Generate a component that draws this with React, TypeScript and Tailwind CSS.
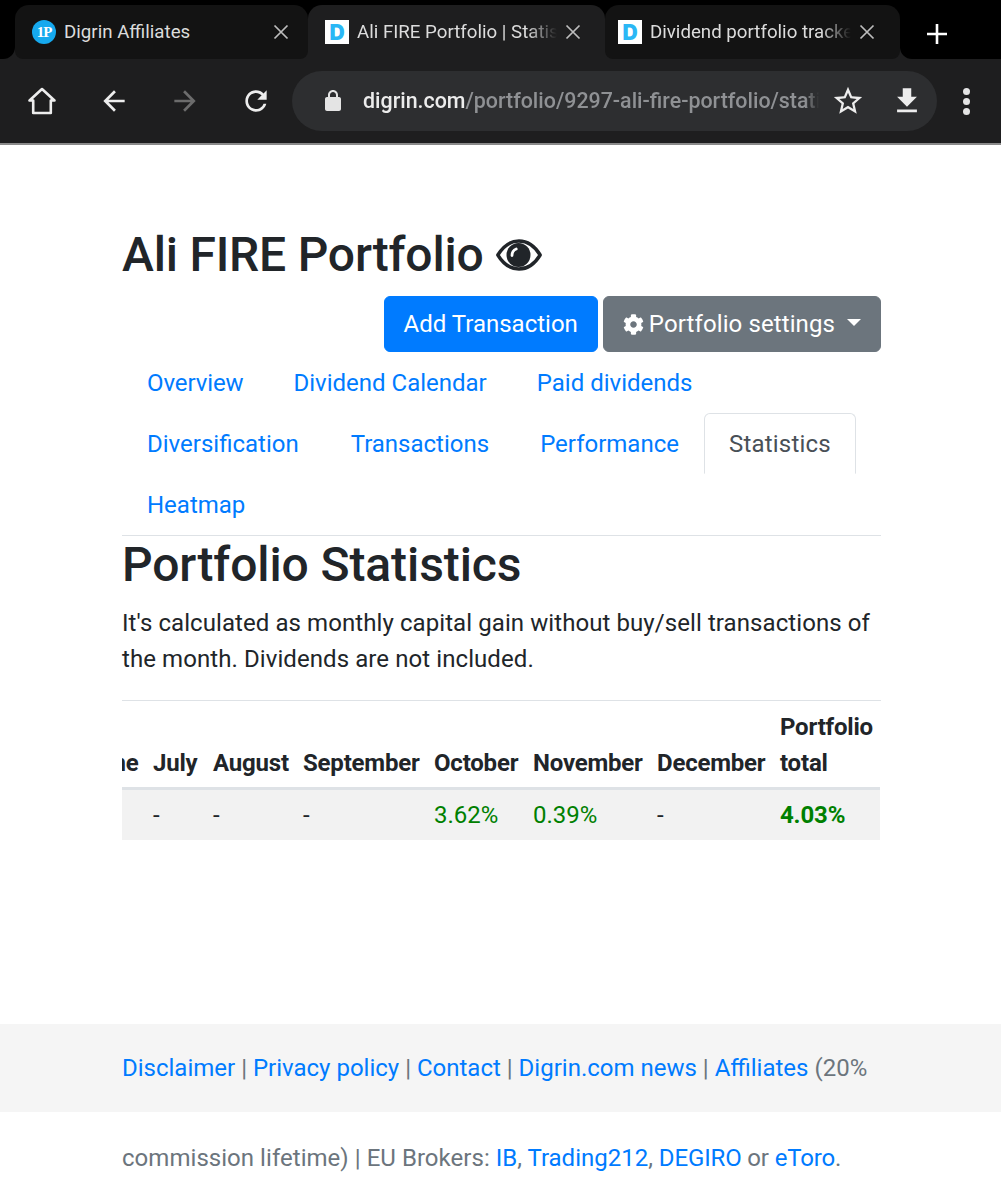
import React from "react";
import { FaCog } from "react-icons/fa";

const MaterialIcon = ({ d, className }: { d: string; className: string }) => (
  <svg viewBox="0 0 24 24" fill="currentColor" className={className}>
    <path d={d} />
  </svg>
);

const BACK = "M20 11H7.83l5.59-5.59L12 4l-8 8 8 8 1.41-1.41L7.83 13H20v-2z";
const FORWARD = "M4 11h12.17l-5.59-5.59L12 4l8 8-8 8-1.41-1.41L16.17 13H4v-2z";
const REFRESH =
  "M17.65 6.35C16.2 4.9 14.21 4 12 4c-4.42 0-7.99 3.58-7.99 8s3.57 8 7.99 8c3.73 0 6.84-2.55 7.73-6h-2.08c-.82 2.33-3.04 4-5.65 4-3.31 0-6-2.69-6-6s2.69-6 6-6c1.66 0 3.14.69 4.22 1.78L13 11h7V4l-2.35 2.35z";
const STAR =
  "M22 9.24l-7.19-.62L12 2 9.19 8.63 2 9.24l5.46 4.73L5.82 21 12 17.27 18.18 21l-1.63-7.03L22 9.24zM12 15.4l-3.76 2.27 1-4.28-3.32-2.88 4.38-.38L12 6.1l1.71 4.04 4.38.38-3.32 2.88 1 4.28L12 15.4z";
const DOWNLOAD = "M19 9h-4V3H9v6H5l7 7 7-7zM5 18v2h14v-2H5z";
const LOCK =
  "M18 8h-1V6c0-2.76-2.24-5-5-5S7 3.24 7 6v2H6c-1.1 0-2 .9-2 2v10c0 1.1.9 2 2 2h12c1.1 0 2-.9 2-2V10c0-1.1-.9-2-2-2zM9 8V6c0-1.66 1.34-3 3-3s3 1.34 3 3v2H9z";

const CloseIcon = () => (
  <svg viewBox="0 0 16 16" className="w-4 h-4 shrink-0 text-[#bdbdbd]" stroke="currentColor" strokeWidth="1.7" fill="none">
    <path d="M1.5 1.5l13 13M14.5 1.5l-13 13" />
  </svg>
);

const DFavicon = () => (
  <div className="w-6 h-6 shrink-0 bg-white flex items-center justify-center text-[#2ab7f5] font-black text-[21px] leading-none font-['Inter',sans-serif]">
    D
  </div>
);

const EyeIcon = () => (
  <svg viewBox="0 0 46 32" className="ml-3 w-[46px] h-8 shrink-0">
    <path
      d="M1.8 16C7 7.5 14.5 2 23 2s16 5.5 21.200 14C39 24.500 31.500 30 23 30S7 24.500 1.800 16Z"
      fill="none"
      stroke="currentColor"
      strokeWidth="3.4"
      strokeLinejoin="round"
    />
    <circle cx="22.500" cy="16" r="12" fill="currentColor" />
    <path d="M16 16.500c0-3.200 1.600-5.500 4.200-6.500" fill="none" stroke="#fff" strokeWidth="2.800" strokeLinecap="round" />
  </svg>
);

// keeps black behind a tab's top corners and toolbar colour behind the bottom ones
const TAB_BACK = "bg-[linear-gradient(to_bottom,#000_50%,#1e1e1f_50%)]";

const BrowserChrome = () => (
  <div className="bg-[#1e1e1f] border-b-2 border-[#8a8a8a] h-[145px]">
    <div className="bg-black h-[59px] pt-[5px]">
      <div className="h-[54px] bg-[#1e1e1f] flex items-stretch">
        <div className="w-[15px] bg-black rounded-br-[12px]" />
        <div className={`w-[293px] ${TAB_BACK}`}>
          <div className="h-full bg-[#131313] rounded-t-[14px] rounded-b-[8px] flex items-center pl-[17px] pr-[19px]">
            <div className="w-6 h-6 shrink-0 rounded-full bg-[#16a9ee] flex items-center justify-center text-white text-[15px] tracking-[-1px] font-bold leading-none font-['Liberation_Serif',serif]">
              1P
            </div>
            <span className="ml-2 flex-1 text-[18.7px] text-[#dcdcdc] whitespace-nowrap">Digrin Affiliates</span>
            <CloseIcon />
          </div>
        </div>
        <div className={`w-[297px] ${TAB_BACK}`}>
          <div className="h-full bg-[#1e1e1f] rounded-t-[14px] flex items-center pl-[17px] pr-6">
            <DFavicon />
            <span className="ml-2 flex-1 text-[18.7px] text-[#dcdcdc] whitespace-nowrap overflow-hidden [mask-image:linear-gradient(to_right,black_85%,transparent)]">
              Ali FIRE Portfolio | Statistics
            </span>
            <div className="ml-2">
              <CloseIcon />
            </div>
          </div>
        </div>
        <div className={`w-[295px] ${TAB_BACK}`}>
          <div className="h-full bg-[#131313] rounded-t-[14px] rounded-b-[8px] flex items-center pl-[13px] pr-[25px]">
            <DFavicon />
            <span className="ml-2 flex-1 text-[18.7px] text-[#dcdcdc] whitespace-nowrap overflow-hidden [mask-image:linear-gradient(to_right,black_85%,transparent)]">
              Dividend portfolio tracker
            </span>
            <div className="ml-2">
              <CloseIcon />
            </div>
          </div>
        </div>
        <div className="flex-1 bg-black rounded-bl-[12px] flex items-center pl-[25px]">
          <svg viewBox="0 0 24 24" className="w-6 h-6 mt-[3px] text-white" stroke="currentColor" strokeWidth="2.6">
            <path d="M12 2v20M2 12h20" />
          </svg>
        </div>
      </div>
    </div>
    <div className="h-[84px] flex items-center pl-[26px]">
      <svg viewBox="0 0 32 32" className="w-8 h-8 text-[#ededed]" fill="none" stroke="currentColor" strokeWidth="2.6" strokeLinejoin="round">
        <path d="M16 4L3.5 15.5h3.7V28h17.6V15.5h3.7z" />
      </svg>
      <MaterialIcon d={BACK} className="w-8 h-8 ml-[40px] text-[#ededed]" />
      <MaterialIcon d={FORWARD} className="w-8 h-8 ml-[39px] text-[#6c6c6c]" />
      <MaterialIcon d={REFRESH} className="w-8 h-8 ml-[39px] text-[#ededed]" />
      <div className="ml-5 w-[645px] h-[60px] rounded-full bg-[#2d2e30] flex items-center pl-[29px]">
        <MaterialIcon d={LOCK} className="w-6 h-6 shrink-0 text-[#e4e4e4]" />
        <div className="ml-[18px] w-[456px] shrink-0 whitespace-nowrap overflow-hidden text-[21.4px] font-medium [mask-image:linear-gradient(to_right,black_97%,transparent)]">
          <span className="text-[#ececec]">digrin.com</span>
          <span className="text-[#8f9194]">/portfolio/9297-ali-fire-portfolio/statistics</span>
        </div>
        <MaterialIcon d={STAR} className="w-[34px] h-[34px] ml-3 shrink-0 text-[#ededed]" />
        <MaterialIcon d={DOWNLOAD} className="w-[34px] h-[34px] ml-[25px] shrink-0 text-[#ededed]" />
      </div>
      <div className="ml-[26px] flex flex-col gap-[3px]">
        <span className="w-[7px] h-[7px] rounded-full bg-[#e4e4e4]" />
        <span className="w-[7px] h-[7px] rounded-full bg-[#e4e4e4]" />
        <span className="w-[7px] h-[7px] rounded-full bg-[#e4e4e4]" />
      </div>
    </div>
  </div>
);

const tabs = [
  { name: "Overview", extra: "tracking-[-0.1px]" },
  { name: "Dividend Calendar", extra: "" },
  { name: "Paid dividends", extra: "" },
  { name: "Diversification", extra: "" },
  { name: "Transactions", extra: "ml-[2px]" },
  { name: "Performance", extra: "ml-[1px]" },
  { name: "Statistics", extra: "" },
  { name: "Heatmap", extra: "" },
];

const NavTabs = () => (
  <ul className="flex flex-wrap border-b border-[#dee2e6]">
    {tabs.map((tab) =>
      tab.name === "Statistics" ? (
        <li key={tab.name} className="-mb-px">
          <a className="block px-6 py-[11.5px] border border-[#dee2e6] border-b-white rounded-t-[6px] text-[#495057] bg-white tracking-[0.2px]">{tab.name}</a>
        </li>
      ) : (
        <li key={tab.name} className={tab.extra}>
          <a className="block px-6 py-[11.5px] border border-transparent text-[#007bff]">{tab.name}</a>
        </li>
      )
    )}
  </ul>
);

const columns = [
  { name: "June", value: "-", width: "w-[67px]" },
  { name: "July", value: "-", width: "w-[60px]" },
  { name: "August", value: "-", width: "w-[90px]" },
  { name: "September", value: "-", width: "w-[131px]" },
  { name: "October", value: "3.62%", width: "w-[99px]", green: true },
  { name: "November", value: "0.39%", width: "w-[124px]", green: true },
  { name: "December", value: "-", width: "w-[123px]" },
];

const StatsTable = () => (
  <div className="overflow-hidden border-t border-[#dee2e6]">
    <table className="ml-[-43px] table-fixed w-[801px] border-collapse">
      <thead>
        <tr className="border-b-[3px] border-[#dee2e6]">
          {columns.map((col) => (
            <th key={col.name} className={`${col.width} pt-2 pb-[6px] px-[7px] text-left align-bottom font-bold tracking-[-0.2px] text-[#212529]`}>
              {col.name}
            </th>
          ))}
          <th className="pt-2 pb-[6px] px-[7px] text-left align-bottom font-bold tracking-[-0.2px] text-[#212529]">
            Portfolio
            <br />
            total
          </th>
        </tr>
      </thead>
      <tbody>
        <tr className="bg-[#f2f2f2]">
          {columns.map((col) => (
            <td key={col.name} className={`py-[7px] px-[7px] ${col.green ? "text-[#008000]" : "text-[#212529]"}`}>
              {col.value}
            </td>
          ))}
          <td className="py-[7px] px-[7px] font-bold tracking-[-0.15px] text-[#008000]">4.03%</td>
        </tr>
      </tbody>
    </table>
  </div>
);

const FooterLink = ({ children }: { children: React.ReactNode }) => <a className="text-[#007bff]">{children}</a>;

export default function App() {
  return (
    <div className="w-[1001px] h-[1200px] overflow-hidden bg-white text-[24px] leading-[36px] text-[#212529] font-['Roboto',sans-serif]">
      <BrowserChrome />
      <div className="pl-[122px] pr-[120px] pt-[81px]">
        <h1 className="text-[48px] leading-[58px] font-medium tracking-[-0.2px] mb-3 flex items-center">
          Ali FIRE Portfolio
          <EyeIcon />
        </h1>
        <div className="flex justify-end gap-[5px]">
          <button className="h-14 px-[19px] rounded-[6px] bg-[#007bff] text-white border border-[#007bff]">Add Transaction</button>
          <button className="h-14 px-[19px] rounded-[6px] bg-[#6c757d] text-white border border-[#6c757d] flex items-center tracking-[0.1px]">
            <FaCog className="w-[21px] h-[21px] mr-[5px]" />
            Portfolio settings
            <span className="ml-3 border-x-[7px] border-x-transparent border-t-[7px] border-t-white mb-[3px]" />
          </button>
        </div>
        <NavTabs />
        <h2 className="text-[48px] leading-[58px] font-medium tracking-[-0.1px] mb-[11px]">Portfolio Statistics</h2>
        <p className="mb-[23px] tracking-[0.08px]">It's calculated as monthly capital gain without buy/sell transactions of the month. Dividends are not included.</p>
        <StatsTable />
      </div>
      <div className="mt-[184px] h-[88px] bg-[#f5f5f5] pl-[122px] flex items-center whitespace-nowrap text-[#6c757d]">
        <span>
          <FooterLink>Disclaimer</FooterLink> | <FooterLink>Privacy policy</FooterLink> | <FooterLink>Contact</FooterLink> |{" "}
          <FooterLink>Digrin.com news</FooterLink> | <FooterLink>Affiliates</FooterLink> (20%
        </span>
      </div>
      <div className="pl-[122px] pt-7 text-[#6c757d] whitespace-nowrap">
        <span className="tracking-[0.04px]">commission lifetime) | EU Brokers:</span> <FooterLink>IB</FooterLink>, <FooterLink>Trading212</FooterLink>,{" "}
        <span className="tracking-[-0.15px]">
          <FooterLink>DEGIRO</FooterLink> or <FooterLink>eToro</FooterLink>.
        </span>
      </div>
    </div>
  );
}
